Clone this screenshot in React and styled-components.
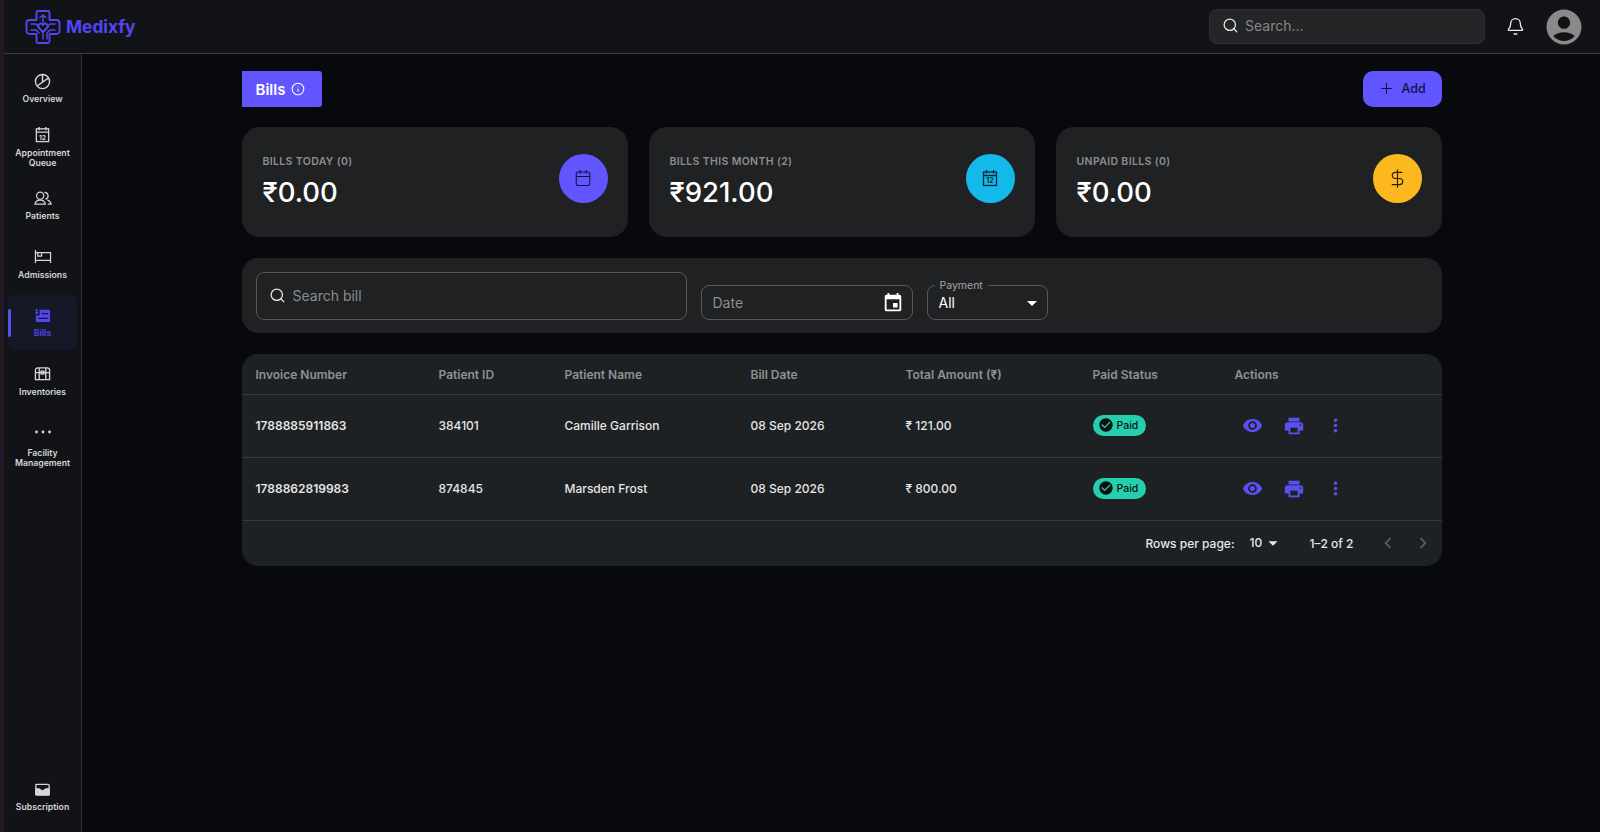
import React from 'react'
import styled, { createGlobalStyle } from 'styled-components'
import { Search, Bell, Plus, Info, Calendar, DollarSign } from 'lucide-react'
import { MdAccountCircle, MdEvent, MdArrowDropDown, MdRemoveRedEye, MdPrint, MdMoreVert, MdCheckCircle, MdChevronLeft, MdChevronRight } from 'react-icons/md'

const GlobalStyle = createGlobalStyle`
html, body {
  margin: 0;
  padding: 0;
  background: #07090c;
  font-family: Inter, "Noto Sans", sans-serif;
  color: #fff;
}
* { box-sizing: border-box; }
`

const LogoIcon = () => (
  <svg width="36" height="36" viewBox="0 0 36 36" fill="none" stroke="#5246f2" strokeWidth="1.9" strokeLinecap="round" strokeLinejoin="round">
    <path d="M13 2h10a1.5 1.5 0 0 1 1.5 1.5V11h7a3 3 0 0 1 3 3v8a3 3 0 0 1-3 3h-7v7.5A1.5 1.5 0 0 1 23 34H13a1.5 1.5 0 0 1-1.500-1.500V25h-7a3 3 0 0 1-3-3v-8a3 3 0 0 1 3-3h7V3.500A1.500 1.500 0 0 1 13 2z" />
    <path d="M18 6v7M15 8.500L18 6l3 2.500M6 15h5l3 3M30 15h-5l-3 3M6 21h5l3 3M30 21h-5l-3 3v6M18 23v7" strokeWidth="1.500" />
    <path d="M18 23l-4.500-4.500a2.400 2.400 0 0 1 4.500-2.500a2.400 2.400 0 0 1 4.500 2.500z" />
  </svg>
)

const OverviewIcon = () => (
  <svg width="17" height="17" viewBox="0 0 18 18" fill="none" stroke="currentColor" strokeWidth="1.500">
    <circle cx="9" cy="9" r="7.500" />
    <path d="M9 1.500V9M3.200 13.800L15.500 5.200" />
  </svg>
)

const QueueIcon = () => (
  <svg width="17" height="17" viewBox="0 0 18 18" fill="none" stroke="currentColor" strokeWidth="1.400">
    <rect x="2.500" y="3" width="13" height="13.500" />
    <path d="M2.500 6.500h13M5.500 1v3.500M12.500 1v3.500" />
    <text x="9" y="14.300" textAnchor="middle" fontSize="7" fontWeight="700" fill="currentColor" stroke="none" fontFamily="Inter">12</text>
  </svg>
)

const PatientsIcon = () => (
  <svg width="18" height="17" viewBox="0 0 19 18" fill="none" stroke="currentColor" strokeWidth="1.300" strokeLinecap="round">
    <circle cx="6.500" cy="6" r="3.800" />
    <path d="M1 15c.3-2.800 2.500-4.400 5.500-4.400S11.700 12.200 12 15z" />
    <path d="M11.500 2.400a3.800 3.800 0 0 1 1 7.300M14.500 10.800c1.900.6 3.200 2 3.500 4.200h-3" />
  </svg>
)

const BedIcon = () => (
  <svg width="18" height="17" viewBox="0 0 18 18" fill="none" stroke="currentColor" strokeWidth="1.300">
    <path d="M1 2v14M1 5h16v11M1 13h16M3.500 5v3.500h4V5" />
  </svg>
)

const BillsIcon = () => (
  <svg width="17" height="17" viewBox="0 0 18 18" fill="currentColor">
    <path d="M6 3h11v13H2V9h4z" />
    <path d="M8 7h7M4.500 12H15" stroke="#16182a" strokeWidth="1.400" />
    <path d="M1.500 3.500h3M1.500 6h3M3 2v6" stroke="currentColor" strokeWidth="1.200" />
  </svg>
)

const ChestIcon = () => (
  <svg width="17" height="17" viewBox="0 0 18 18" fill="none" stroke="currentColor" strokeWidth="1.400">
    <path d="M1.500 8V5.500a2.500 2.500 0 0 1 2.500-2.500h10a2.500 2.500 0 0 1 2.500 2.500V15.500h-15V8zM1.500 8h15M5.500 3v12.500M12.500 3v12.500" />
    <rect x="7.500" y="6.500" width="3" height="3" />
  </svg>
)

const DotsIcon = () => (
  <svg width="18" height="18" viewBox="0 0 18 18" fill="currentColor">
    <circle cx="2.500" cy="9" r="1.400" />
    <circle cx="9" cy="9" r="1.400" />
    <circle cx="15.500" cy="9" r="1.400" />
  </svg>
)

const SubIcon = () => (
  <svg width="17" height="17" viewBox="0 0 18 18" fill="none" stroke="currentColor" strokeWidth="1.400">
    <rect x="2" y="3.500" width="14" height="11.500" rx="1" />
    <path d="M2 8.500h3.500L9 11l3.500-2.500H16v6H2z" fill="currentColor" />
  </svg>
)

const CalendarTwelve = () => (
  <svg width="18" height="18" viewBox="0 0 18 18" fill="none" stroke="#0d2a38" strokeWidth="1.300">
    <rect x="2.500" y="3" width="13" height="13.500" />
    <path d="M2.500 6.500h13M5.500 1v3.500M12.500 1v3.500" />
    <text x="9" y="14.300" textAnchor="middle" fontSize="7" fontWeight="700" fill="#0d2a38" stroke="none" fontFamily="Inter">12</text>
  </svg>
)

const navItems = [
  { label: 'Overview', icon: <OverviewIcon /> },
  { label: 'Appointment Queue', icon: <QueueIcon /> },
  { label: 'Patients', icon: <PatientsIcon /> },
  { label: 'Admissions', icon: <BedIcon /> },
  { label: 'Bills', icon: <BillsIcon />, active: true },
  { label: 'Inventories', icon: <ChestIcon /> },
  { label: 'Facility Management', icon: <DotsIcon />, tall: true },
]

const stats = [
  { title: 'BILLS TODAY (0)', value: '₹0.00', color: '#6155ff', icon: <Calendar size={18} strokeWidth={1.4} color="#14123c" /> },
  { title: 'BILLS THIS MONTH (2)', value: '₹921.00', color: '#12b9ea', icon: <CalendarTwelve /> },
  { title: 'UNPAID BILLS (0)', value: '₹0.00', color: '#fdb71f', icon: <DollarSign size={21} strokeWidth={1.3} color="#2a2008" /> },
]

const bills = [
  { invoice: '1788885911863', pid: '384101', name: 'Camille Garrison', date: '08 Sep 2026', total: '₹ 121.00' },
  { invoice: '1788862819983', pid: '874845', name: 'Marsden Frost', date: '08 Sep 2026', total: '₹ 800.00' },
]

const App = () => {
  return (
    <Page>
      <GlobalStyle />
      <LeftStrip />
      <Shell>
        <Header>
          <Brand>
            <LogoIcon />
            <BrandName>Medixfy</BrandName>
          </Brand>
          <HeaderRight>
            <TopSearch>
              <Search size={17} color="#e8e8e8" strokeWidth={1.8} />
              <span>Search...</span>
            </TopSearch>
            <Bell size={19} color="#f0f0f0" strokeWidth={1.600} />
            <Avatar />
          </HeaderRight>
        </Header>
        <Body>
          <Sidebar>
            <NavList>
              {navItems.map((item) => (
                <NavItem key={item.label} $active={item.active} $tall={item.tall}>
                  {item.icon}
                  <span>{item.label}</span>
                </NavItem>
              ))}
            </NavList>
            <NavItem>
              <SubIcon />
              <span>Subscription</span>
            </NavItem>
          </Sidebar>
          <Main>
            <Content>
              <TitleRow>
                <TitleTag>
                  Bills
                  <Info size={14} strokeWidth={1.800} />
                </TitleTag>
                <AddButton>
                  <Plus size={17} strokeWidth={1.500} />
                  Add
                </AddButton>
              </TitleRow>

              <StatsRow>
                {stats.map((s) => (
                  <StatCard key={s.title}>
                    <StatText>
                      <StatTitle>{s.title}</StatTitle>
                      <StatValue>{s.value}</StatValue>
                    </StatText>
                    <StatIcon $color={s.color}>{s.icon}</StatIcon>
                  </StatCard>
                ))}
              </StatsRow>

              <FilterBar>
                <SearchBox>
                  <Search size={17} color="#e8e8e8" strokeWidth={1.8} />
                  <span>Search bill</span>
                </SearchBox>
                <DateBox>
                  <span>Date</span>
                  <MdEvent size={22} color="#fff" />
                </DateBox>
                <SelectBox>
                  <SelectLabel>Payment</SelectLabel>
                  <span>All</span>
                  <MdArrowDropDown size={24} color="#fff" />
                </SelectBox>
              </FilterBar>

              <TableCard>
                <Table>
                  <colgroup>
                    <col style={{ width: 183 }} />
                    <col style={{ width: 126 }} />
                    <col style={{ width: 186 }} />
                    <col style={{ width: 155 }} />
                    <col style={{ width: 187 }} />
                    <col style={{ width: 142 }} />
                    <col />
                  </colgroup>
                  <thead>
                    <tr>
                      <Th>Invoice Number</Th>
                      <Th>Patient ID</Th>
                      <Th>Patient Name</Th>
                      <Th>Bill Date</Th>
                      <Th>Total Amount (₹)</Th>
                      <Th>Paid Status</Th>
                      <Th>Actions</Th>
                    </tr>
                  </thead>
                  <tbody>
                    {bills.map((b) => (
                      <tr key={b.invoice}>
                        <Td $bold>{b.invoice}</Td>
                        <Td>{b.pid}</Td>
                        <Td>{b.name}</Td>
                        <Td>{b.date}</Td>
                        <Td>{b.total}</Td>
                        <Td>
                          <PaidChip>
                            <MdCheckCircle size={16} color="#08110f" />
                            Paid
                          </PaidChip>
                        </Td>
                        <Td>
                          <Actions>
                            <MdRemoveRedEye size={21} />
                            <MdPrint size={22} />
                            <MdMoreVert size={21} />
                          </Actions>
                        </Td>
                      </tr>
                    ))}
                  </tbody>
                </Table>
                <Pagination>
                  <span>Rows per page:</span>
                  <RowsSelect>
                    10
                    <MdArrowDropDown size={22} color="#e8e8e8" />
                  </RowsSelect>
                  <PageCount>1–2 of 2</PageCount>
                  <PageArrows>
                    <MdChevronLeft size={22} />
                    <MdChevronRight size={22} />
                  </PageArrows>
                </Pagination>
              </TableCard>
            </Content>
          </Main>
        </Body>
      </Shell>
    </Page>
  )
}

export default App

const Page = styled.div`
display: flex;
width: 100%;
height: 832px;
overflow: hidden;
`
const LeftStrip = styled.div`
width: 4px;
background: #231825;
flex-shrink: 0;
`
const Shell = styled.div`
flex: 1;
display: flex;
flex-direction: column;
min-width: 0;
`
const Header = styled.header`
height: 54px;
flex-shrink: 0;
background: #111316;
border-bottom: 1px solid #3b3e41;
display: flex;
align-items: center;
justify-content: space-between;
padding: 0 15px 0 21px;
`
const Brand = styled.div`
display: flex;
align-items: center;
gap: 5px;
`
const BrandName = styled.div`
font-size: 17.300px;
font-weight: 700;
color: #5246f2;
`
const HeaderRight = styled.div`
display: flex;
align-items: center;
`
const TopSearch = styled.div`
width: 276px;
height: 35px;
background: #232527;
border: 1px solid #2e3033;
border-radius: 8px;
display: flex;
align-items: center;
gap: 6px;
padding: 0 12px 3px;
margin-right: 21px;
font-size: 14px;
color: #85878a;
`
const Avatar = styled(MdAccountCircle)`
width: 42px;
height: 42px;
color: #8a8a8a;
margin-left: 18px;
background: radial-gradient(circle, #101214 0 62%, transparent 63%);
border-radius: 50%;
`
const Body = styled.div`
flex: 1;
display: flex;
min-height: 0;
`
const Sidebar = styled.nav`
width: 78px;
flex-shrink: 0;
background: #111316;
border-right: 1px solid #2e3033;
display: flex;
flex-direction: column;
justify-content: space-between;
padding: 7px 0 8px;
`
const NavList = styled.div`
display: flex;
flex-direction: column;
gap: 3.500px;
`
const NavItem = styled.div`
position: relative;
margin: 0 4px;
min-height: ${(p) => (p.$tall ? '66px' : '55px')};
border-radius: 6px;
display: flex;
flex-direction: column;
align-items: center;
justify-content: center;
gap: ${(p) => (p.$tall ? '7px' : '4.500px')};
color: ${(p) => (p.$active ? '#5246f2' : '#d5d6d8')};
background: ${(p) => (p.$active ? '#151827' : 'transparent')};
font-size: 8.700px;
font-weight: 600;
line-height: 10px;
text-align: center;
span { max-width: 66px; }
${(p) => p.$active && `
&::before {
  content: "";
  position: absolute;
  left: 0;
  top: 14px;
  bottom: 13px;
  width: 3px;
  border-radius: 2px;
  background: #5a50f0;
}
`}
`
const Main = styled.main`
flex: 1;
min-width: 0;
padding: 17px 0 0 1px;
display: flex;
justify-content: center;
`
const Content = styled.div`
width: 1200px;
display: flex;
flex-direction: column;
`
const TitleRow = styled.div`
display: flex;
justify-content: space-between;
align-items: center;
margin-bottom: 20px;
`
const TitleTag = styled.div`
height: 36px;
width: 80px;
background: #6155ff;
border-radius: 0 3px 3px 0;
display: flex;
align-items: center;
gap: 6px;
padding-left: 14px;
font-size: 15px;
font-weight: 600;
`
const AddButton = styled.div`
width: 79px;
height: 36px;
background: #6155ff;
border-radius: 10px;
display: flex;
align-items: center;
justify-content: center;
gap: 6px;
padding-bottom: 1px;
font-size: 12.500px;
font-weight: 500;
color: #14123c;
`
const StatsRow = styled.div`
display: grid;
grid-template-columns: repeat(3, 1fr);
gap: 21px;
margin-bottom: 21px;
`
const StatCard = styled.div`
height: 110px;
background: #1f2123;
border-radius: 18px;
display: flex;
align-items: center;
justify-content: space-between;
padding: 0 20px 8px 21px;
`
const StatText = styled.div`
padding-top: 8px;
`
const StatTitle = styled.div`
font-size: 10.500px;
font-weight: 600;
letter-spacing: 0.35px;
color: #8b8d90;
margin-bottom: 7px;
`
const StatValue = styled.div`
font-size: 27.500px;
font-weight: 500;
line-height: 34px;
color: #fff;
`
const StatIcon = styled.div`
width: 49px;
height: 49px;
border-radius: 50%;
background: ${(p) => p.$color};
display: flex;
align-items: center;
justify-content: center;
`
const FilterBar = styled.div`
height: 75px;
background: #1f2123;
border-radius: 16px;
display: flex;
align-items: flex-end;
padding: 0 14px 13px;
gap: 14px;
margin-bottom: 21px;
`
const SearchBox = styled.div`
width: 431px;
height: 48px;
border: 1px solid #55575a;
border-radius: 8px;
display: flex;
align-items: center;
gap: 7px;
padding: 0 12px 1px;
font-size: 14px;
color: #8b8d90;
`
const DateBox = styled.div`
width: 212px;
height: 35px;
border: 1px solid #55575a;
border-radius: 8px;
display: flex;
align-items: center;
justify-content: space-between;
padding: 0 8px 0 11px;
font-size: 14px;
color: #8b8d90;
`
const SelectBox = styled.div`
position: relative;
width: 121px;
height: 35px;
border: 1px solid #55575a;
border-radius: 8px;
display: flex;
align-items: center;
justify-content: space-between;
padding: 0 3px 0 11px;
font-size: 14px;
color: #fff;
`
const SelectLabel = styled.div`
position: absolute;
left: 7px;
top: -6px;
padding: 0 5px;
background: #1f2123;
font-size: 10.500px;
line-height: 12px;
color: #a4a6a9;
`
const TableCard = styled.div`
background: #1e2124;
border-radius: 16px;
overflow: hidden;
`
const Table = styled.table`
width: 100%;
border-collapse: collapse;
table-layout: fixed;
`
const Th = styled.th`
height: 40px;
padding: 1px 0 0 14px;
text-align: left;
font-size: 12px;
font-weight: 600;
color: #8f9194;
border-bottom: 1px solid #36383b;
`
const Td = styled.td`
height: 63px;
padding: 0 0 0 14px;
font-size: 12px;
font-weight: ${(p) => (p.$bold ? 600 : 500)};
color: #e6e6e6;
border-bottom: 1px solid #36383b;
`
const PaidChip = styled.div`
display: inline-flex;
align-items: center;
gap: 3px;
height: 21px;
width: 53px;
padding-left: 5px;
border-radius: 11px;
background: #25cfae;
font-size: 10.500px;
font-weight: 500;
color: #08110f;
`
const Actions = styled.div`
display: flex;
align-items: center;
gap: 20px;
padding-left: 7px;
color: #5a50f0;
svg { flex-shrink: 0; }
`
const Pagination = styled.div`
height: 45px;
display: flex;
align-items: center;
justify-content: flex-end;
padding-right: 8px;
font-size: 12px;
font-weight: 500;
color: #e8e8e8;
`
const RowsSelect = styled.div`
display: flex;
align-items: center;
margin-left: 15px;
width: 60px;
gap: 0;
padding-bottom: 1px;
`
const PageCount = styled.div`
margin-right: 23px;
`
const PageArrows = styled.div`
display: flex;
align-items: center;
gap: 13px;
color: #5a5c5f;
`
